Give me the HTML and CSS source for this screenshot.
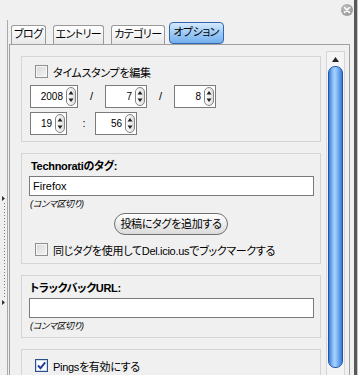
FILE: index.html
```html
<!DOCTYPE html>
<html lang="ja">
<head>
    <meta charset="UTF-8">
    <meta name="viewport" content="width=device-width, initial-scale=1.0">
    <title>オプション</title>
    <link rel="stylesheet" href="styles.css">
</head>
<body>
    <div class="window">
        <div class="titlebar">
            <span class="close-btn">
                <svg width="12" height="12" viewBox="0 0 12 12"><path d="M3.5 3.5 L8.5 8.5 M8.5 3.5 L3.5 8.5" stroke="#fff" stroke-width="1.6" stroke-linecap="round"/></svg>
            </span>
        </div>

        <div class="main">
            <div class="gutter">
                <svg class="splitter" width="7" height="112" viewBox="0 0 7 112">
                    <path d="M2 1 L5 3.5 L2 6 Z" fill="#333"/>
                    <line x1="4.5" y1="8" x2="4.5" y2="104" stroke="#777" stroke-width="1" stroke-dasharray="1 2"/>
                    <path d="M2 105 L5 107.5 L2 110 Z" fill="#333"/>
                </svg>
            </div>

            <div class="tabview">
                <div class="tabs">
                    <span class="tab">ブログ</span>
                    <span class="tab">エントリー</span>
                    <span class="tab">カテゴリー</span>
                    <span class="tab active">オプション</span>
                </div>

                <div class="panel">
                    <div class="sections">
                        <!-- タイムスタンプ -->
                        <div class="group stamp">
                            <label class="check-row">
                                <span class="cb"></span>
                                <span>タイムスタンプを編集</span>
                            </label>
                            <div class="spin-row date-row">
                                <span class="spin year"><span class="val">2008</span><span class="arrows"></span></span>
                                <span class="sep">/</span>
                                <span class="spin"><span class="val">7</span><span class="arrows"></span></span>
                                <span class="sep">/</span>
                                <span class="spin"><span class="val">8</span><span class="arrows"></span></span>
                            </div>
                            <div class="spin-row time-row">
                                <span class="spin hour"><span class="val">19</span><span class="arrows"></span></span>
                                <span class="sep colon">:</span>
                                <span class="spin"><span class="val">56</span><span class="arrows"></span></span>
                            </div>
                        </div>

                        <!-- Technorati -->
                        <div class="group tags">
                            <div class="field-label">Technoratiのタグ:</div>
                            <div class="text-input">Firefox</div>
                            <div class="hint">(コンマ区切り)</div>
                            <div class="btn-row">
                                <span class="pill-btn">投稿にタグを追加する</span>
                            </div>
                            <label class="check-row">
                                <span class="cb"></span>
                                <span>同じタグを使用してDel.icio.usでブックマークする</span>
                            </label>
                        </div>

                        <!-- トラックバック -->
                        <div class="group trackback">
                            <div class="field-label tb">トラックバックURL:</div>
                            <div class="text-input"></div>
                            <div class="hint">(コンマ区切り)</div>
                        </div>

                        <div class="group pings">
                            <label class="check-row">
                                <span class="cb checked">
                                    <svg width="11" height="11" viewBox="0 0 11 11"><path d="M2 5.5 L4.5 8.2 L9.2 2.4" fill="none" stroke="#23419a" stroke-width="2"/></svg>
                                </span>
                                <span>Pingsを有効にする</span>
                            </label>
                        </div>
                    </div>

                    <div class="scrollbar">
                        <div class="scroll-up">
                            <svg width="7" height="5" viewBox="0 0 7 5"><path d="M3.5 0 L7 5 L0 5 Z" fill="#222"/></svg>
                        </div>
                        <div class="thumb"></div>
                    </div>
                </div>
            </div>
        </div>
    </div>
    <div class="edge"></div>
</body>
</html>
```

FILE: styles.css
```css
body {
    margin: 0;
    display: flex;
    height: 375px;
    overflow: hidden;
    background-color: #f0f0f0;
    font-family: 'Liberation Sans', 'Noto Sans CJK JP', sans-serif;
    font-size: 11px;
    font-feature-settings: 'palt';
    letter-spacing: -0.3px;
    color: #000;
}

.window {
    width: 354px;
    display: flex;
    flex-direction: column;
}

.titlebar {
    height: 20px;
    display: flex;
    justify-content: flex-end;
}

.close-btn {
    width: 12px;
    height: 12px;
    margin: 4px 1px 0 0;
    border-radius: 50%;
    background: radial-gradient(circle at 40% 35%, #bdbdbd, #8d8d8d);
    display: flex;
}

.main {
    flex: 1;
    display: flex;
    min-height: 0;
}

.gutter {
    width: 7px;
    border-right: 1px solid #a9a9a9;
}

.splitter {
    display: block;
    margin-top: 175px;
}

.tabview {
    width: 341px;
    margin-left: 1px;
    display: flex;
    flex-direction: column;
}

/* タブ */
.tabs {
    height: 24px;
    display: flex;
    align-items: flex-end;
    gap: 7px;
    padding-left: 2px;
}

.tab {
    height: 19px;
    box-sizing: border-box;
    padding: 0 2px;
    line-height: 17px;
    letter-spacing: -0.6px;
    border: 1px solid #9a9a9a;
    border-bottom: none;
    border-radius: 3px 3px 0 0;
    background: linear-gradient(to bottom, #ffffff, #e8e8e8);
}

.tab.active {
    height: 22px;
    margin-left: -3px;
    padding: 0 4px;
    line-height: 19px;
    border: 1px solid #3466b0;
    border-radius: 4px;
    background: linear-gradient(to bottom, #d6eafd, #9ccaf6 50%, #74b0ee);
}

.panel {
    flex: 1;
    display: flex;
    padding: 6px 4px 0 11px;
    border: 1px solid #a0a0a0;
    border-bottom: none;
    min-height: 0;
}

.sections {
    width: 300px;
    padding-top: 5px;
    display: flex;
    flex-direction: column;
    gap: 11px;
}

.group {
    border: 1px solid #d4d4d4;
    padding: 0 0 0 7px;
    flex-shrink: 0;
}

.stamp {
    padding-top: 8px;
    padding-bottom: 6px;
}

.tags {
    padding-top: 5px;
    padding-bottom: 7px;
}

.trackback {
    padding-top: 5px;
    padding-bottom: 5px;
}

.pings {
    padding-top: 9px;
    height: 40px;
}

/* チェックボックス */
.check-row {
    display: flex;
    align-items: center;
    gap: 5px;
    height: 13px;
    padding-left: 6px;
}

.cb {
    width: 13px;
    height: 13px;
    box-sizing: border-box;
    border: 1px solid #8f8f8f;
    background: linear-gradient(135deg, #d8d8d8, #f4f4f4);
    box-shadow: inset 0 0 0 1px #f7f7f7;
    display: flex;
    align-items: center;
    justify-content: center;
}

.cb.checked {
    border-color: #2b4f86;
    background: #fff;
    box-shadow: inset 0 0 0 1px #c9dcf2;
}

/* スピンボックス */
.spin-row {
    display: flex;
    padding-left: 1px;
}

.date-row {
    margin-top: 7px;
}

.time-row {
    margin-top: 4px;
}

.spin {
    width: 42px;
    height: 23px;
    box-sizing: border-box;
    border: 1px solid #7b7b7b;
    background: #fff;
    display: flex;
    align-items: center;
    justify-content: flex-end;
}

.spin.year {
    width: 48px;
}

.spin.hour {
    width: 37px;
}

.val {
    padding-right: 3px;
    font-size: 10px;
    letter-spacing: 0;
}

.arrows {
    width: 10px;
    height: 19px;
    box-sizing: border-box;
    margin-right: 1px;
    border: 1px solid #858585;
    border-radius: 5px;
    background:
        url("data:image/svg+xml,%3Csvg xmlns='http://www.w3.org/2000/svg' width='8' height='17'%3E%3Cpath d='M4 3 L6.5 6.5 L1.5 6.5 Z M4 14 L6.5 10.5 L1.5 10.5 Z' fill='%23222'/%3E%3C/svg%3E") center no-repeat,
        linear-gradient(to right, #ffffff, #dedede);
}

.sep {
    width: 27px;
    text-align: center;
    line-height: 23px;
}

.sep.colon {
    width: 28px;
    padding-left: 6px;
    box-sizing: border-box;
}

/* テキスト入力 */
.field-label {
    font-weight: bold;
    line-height: 14px;
    padding-left: 2px;
}

.field-label.tb {
    padding-left: 1px;
}

.text-input {
    width: 285px;
    height: 20px;
    box-sizing: border-box;
    margin-top: 3px;
    padding-left: 3px;
    line-height: 18px;
    letter-spacing: 0;
    border: 1px solid #7a7a7a;
    background: #fff;
}

.hint {
    margin-top: 2px;
    padding-left: 1px;
    line-height: 12px;
    font-size: 9px;
    font-style: italic;
}

.btn-row {
    display: flex;
    justify-content: center;
    margin-top: 3px;
    margin-bottom: 8px;
    padding-right: 7px;
}

.pill-btn {
    height: 22px;
    box-sizing: border-box;
    padding: 0 5px;
    line-height: 20px;
    border: 1px solid #6f6f6f;
    border-radius: 11px;
    background: linear-gradient(to bottom, #ffffff, #ececec 50%, #dcdcdc);
}

/* スクロールバー */
.scrollbar {
    width: 19px;
    margin-left: 5px;
    box-sizing: border-box;
    border: 1px solid #d6d6d6;
    border-bottom: none;
    background: #f4f4f4;
    display: flex;
    flex-direction: column;
    align-items: center;
}

.scroll-up {
    height: 14px;
    width: 100%;
    display: flex;
    align-items: center;
    justify-content: center;
}

.thumb {
    width: 15px;
    height: 302px;
    box-sizing: border-box;
    border: 1px solid #2456a8;
    border-radius: 7px;
    background: linear-gradient(to right, #3c7ddb, #8cc0f8 30%, #a9d2ff 45%, #6aa6ee 75%, #3a78d6);
}

.edge {
    width: 4px;
    box-sizing: border-box;
    border-left: 3px solid #585858;
    background: #c6c6c6;
}
```
